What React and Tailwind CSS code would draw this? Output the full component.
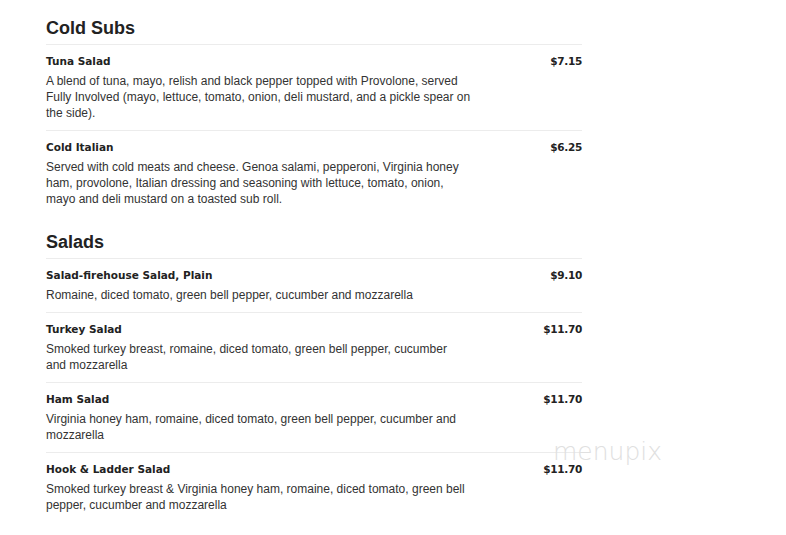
const sections = [
  {
    title: 'Cold Subs',
    items: [
      {
        name: 'Tuna Salad',
        price: '$7.15',
        desc: [
          'A blend of tuna, mayo, relish and black pepper topped with Provolone, served',
          'Fully Involved (mayo, lettuce, tomato, onion, deli mustard, and a pickle spear on',
          'the side).',
        ],
      },
      {
        name: 'Cold Italian',
        price: '$6.25',
        desc: [
          'Served with cold meats and cheese. Genoa salami, pepperoni, Virginia honey',
          'ham, provolone, Italian dressing and seasoning with lettuce, tomato, onion,',
          'mayo and deli mustard on a toasted sub roll.',
        ],
      },
    ],
  },
  {
    title: 'Salads',
    items: [
      {
        name: 'Salad-firehouse Salad, Plain',
        price: '$9.10',
        desc: ['Romaine, diced tomato, green bell pepper, cucumber and mozzarella'],
      },
      {
        name: 'Turkey Salad',
        price: '$11.70',
        desc: [
          'Smoked turkey breast, romaine, diced tomato, green bell pepper, cucumber',
          'and mozzarella',
        ],
      },
      {
        name: 'Ham Salad',
        price: '$11.70',
        desc: [
          'Virginia honey ham, romaine, diced tomato, green bell pepper, cucumber and',
          'mozzarella',
        ],
      },
      {
        name: 'Hook & Ladder Salad',
        price: '$11.70',
        desc: [
          'Smoked turkey breast & Virginia honey ham, romaine, diced tomato, green bell',
          'pepper, cucumber and mozzarella',
        ],
      },
    ],
  },
];

const MenuItem = ({ item }) => (
  <div className="border-t border-[#ececec] pt-[9px] pb-[9px] flex justify-between">
    <div>
      <h3 className="text-[10.5px] leading-[14px] font-bold text-[#222] font-['DejaVu_Sans',sans-serif]">
        {item.name}
      </h3>
      <p className="mt-[5px] text-[12px] leading-[16px] text-[#333]">
        {item.desc.map((line, i) => (
          <span key={i} className="block">
            {line}
          </span>
        ))}
      </p>
    </div>
    <span className="text-[10.5px] leading-[14px] font-bold tracking-[-0.3px] text-[#222] font-['DejaVu_Sans',sans-serif]">
      {item.price}
    </span>
  </div>
);

const App = () => {
  return (
    <div className="relative w-[786px] h-[535px] bg-white overflow-hidden font-['Liberation_Sans',Arial,sans-serif]">
      <div className="w-[536px] ml-[46px] pt-[16px]">
        {sections.map((section) => (
          <section key={section.title} className="mb-[14px]">
            <h2 className="text-[18px] leading-[24px] font-bold text-[#222] mb-[4px]">
              {section.title}
            </h2>
            {section.items.map((item) => (
              <MenuItem key={item.name} item={item} />
            ))}
          </section>
        ))}
      </div>

      {/* watermark */}
      <div className="absolute left-[553px] top-[439px] text-[25px] leading-none font-extralight text-[#e0e0e0] font-['DejaVu_Sans',sans-serif] pointer-events-none">
        menupix
      </div>
    </div>
  );
};

export default App;
